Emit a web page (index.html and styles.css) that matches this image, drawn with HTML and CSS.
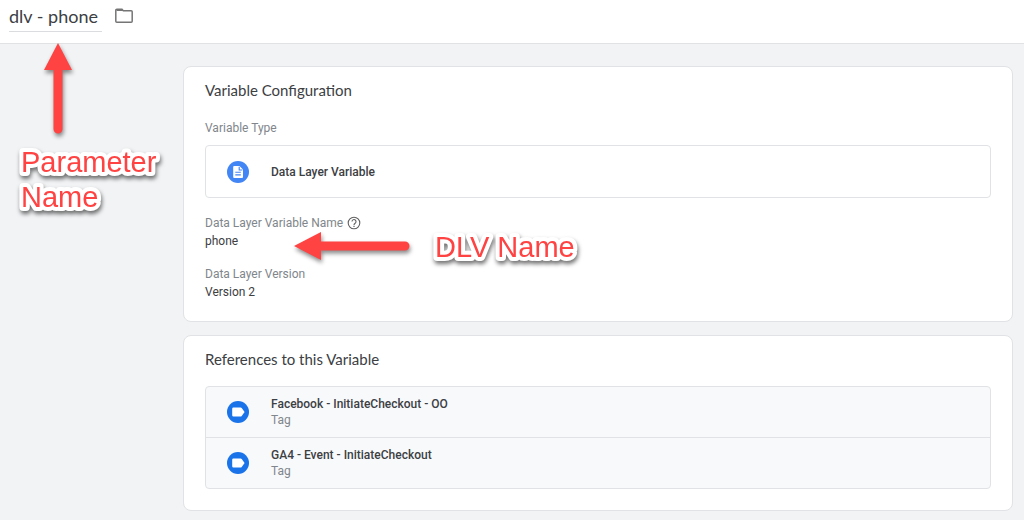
FILE: index.html
```html
<!DOCTYPE html>
<html lang="en">
<head>
    <meta charset="UTF-8">
    <meta name="viewport" content="width=device-width, initial-scale=1.0">
    <title>dlv - phone</title>
    <link rel="stylesheet" href="styles.css">
</head>
<body>
    <header class="topbar">
        <input type="text" class="variable-name" value="dlv - phone" aria-label="Variable name">
        <button type="button" class="folder-button" aria-label="Move to folder">
            <svg width="20" height="16" viewBox="0 0 20 16" fill="none" stroke="#757575" stroke-width="1.5">
                <path d="M1.8 3.2V13.2a1 1 0 0 0 1 1H17.2a1 1 0 0 0 1-1V3.7a1 1 0 0 0-1-1H9.3L8 1.3H2.8a1 1 0 0 0-1 1z"/>
                <path d="M2.5 1.5H8l1.4 1.6H2.5z" fill="#757575" stroke="none"/>
            </svg>
        </button>
    </header>

    <main class="content">
        <section class="card">
            <h2>Variable Configuration</h2>
            <div class="label">Variable Type</div>
            <button type="button" class="type-box">
                <svg class="icon" viewBox="0 0 22 22">
                    <circle cx="11" cy="11" r="11" fill="#4285f4"/>
                    <path d="M7.2 5h5.3L16 8.5V16a1 1 0 0 1-1 1H7.2a1 1 0 0 1-1-1V6a1 1 0 0 1 1-1z" fill="#fff"/>
                    <path d="M12.2 5.8V9h3.1M8.3 11.3h5.5M8.3 13.9h5.5" fill="none" stroke="#4285f4" stroke-width="1.1"/>
                </svg>
                <span class="item-name">Data Layer Variable</span>
            </button>

            <dl class="fields">
                <div class="field">
                    <dt class="label">
                        Data Layer Variable Name
                        <svg class="help" viewBox="0 0 14 14" fill="none" stroke="#616161">
                            <circle cx="7" cy="7" r="5.8" stroke-width="1.1"/>
                            <path d="M5 5.6a2 2 0 1 1 3.3 1.5C7.5 7.7 7 8 7 8.9" stroke-width="1.1"/>
                            <path d="M7 9.8v1.2" stroke-width="1.2"/>
                        </svg>
                    </dt>
                    <dd>phone</dd>
                </div>
                <div class="field">
                    <dt class="label">Data Layer Version</dt>
                    <dd>Version 2</dd>
                </div>
            </dl>
        </section>

        <section class="card">
            <h2>References to this Variable</h2>
            <ul class="references">
                <li>
                    <a href="#">
                        <svg class="icon" viewBox="0 0 22 22">
                            <circle cx="11" cy="11" r="11" fill="#1a73e8"/>
                            <path d="M6.4 6.5h7.2c.5 0 .8.2 1.1.6L17.6 11l-2.9 3.9c-.3.4-.6.6-1.1.6H6.4a1.2 1.2 0 0 1-1.2-1.2V7.7a1.2 1.2 0 0 1 1.2-1.2z" fill="#fff"/>
                        </svg>
                        <span>
                            <span class="item-name">Facebook - InitiateCheckout - OO</span>
                            <span class="item-type">Tag</span>
                        </span>
                    </a>
                </li>
                <li>
                    <a href="#">
                        <svg class="icon" viewBox="0 0 22 22">
                            <circle cx="11" cy="11" r="11" fill="#1a73e8"/>
                            <path d="M6.4 6.5h7.2c.5 0 .8.2 1.1.6L17.6 11l-2.9 3.9c-.3.4-.6.6-1.1.6H6.4a1.2 1.2 0 0 1-1.2-1.2V7.7a1.2 1.2 0 0 1 1.2-1.2z" fill="#fff"/>
                        </svg>
                        <span>
                            <span class="item-name">GA4 - Event - InitiateCheckout</span>
                            <span class="item-type">Tag</span>
                        </span>
                    </a>
                </li>
            </ul>
        </section>
    </main>

    <!-- Callouts over the page -->
    <svg class="arrow arrow-up" width="28" height="92" viewBox="0 0 28 92">
        <path d="M14 0L28 27H18.5V86a4.5 4.5 0 0 1-9 0V27H0z" fill="#ff4242"/>
    </svg>
    <svg class="callout callout-parameter" width="140" height="70">
        <text x="0" y="28">Parameter</text>
        <text x="0" y="63">Name</text>
    </svg>
    <svg class="arrow arrow-left" width="117" height="28" viewBox="0 0 117 28">
        <path d="M0 14L27 0V9.5H111a4.5 4.5 0 0 1 0 9H27V28z" fill="#ff4242"/>
    </svg>
    <svg class="callout callout-dlv" width="150" height="35">
        <text x="0" y="28">DLV Name</text>
    </svg>
</body>
</html>
```
FILE: styles.css
```css
* {
    box-sizing: border-box;
}
body {
    position: relative;
    margin: 0;
    min-height: 100vh;
    background: #f1f3f4;
    color: #3c4043;
    font-family: Roboto, sans-serif;
    font-size: 12px;
    line-height: 16px;
}
h2, dl, dd, ul {
    margin: 0;
    padding: 0;
}
button {
    font: inherit;
    color: inherit;
    cursor: pointer;
}
.topbar {
    display: flex;
    align-items: flex-start;
    gap: 12px;
    height: 44px;
    padding-left: 9px;
    background: #fff;
    border-bottom: 1px solid #e0e2e4;
}
.variable-name {
    width: 93px;
    height: 32px;
    padding: 0;
    border: none;
    border-bottom: 1px solid #dadce0;
    outline: none;
    color: #3c4043;
    font-family: Lato, sans-serif;
    font-size: 18px;
}
.folder-button {
    display: flex;
    margin-top: 8px;
    padding: 0;
    border: none;
    background: none;
}
.content {
    display: flex;
    flex-direction: column;
    gap: 13px;
    padding: 22px 11px 9px 183px;
}
.card {
    padding: 13px 21px 21px;
    background: #fff;
    border: 1px solid #e0e2e5;
    border-radius: 8px;
}
h2 {
    color: #3c4043;
    font-family: Lato, sans-serif;
    font-size: 15px;
    font-weight: 400;
    line-height: 20px;
}
.label {
    color: #80868b;
}
.card > .label {
    margin: 20px 0 9px;
}
.icon {
    flex: none;
    width: 22px;
    height: 22px;
}
.type-box {
    display: flex;
    align-items: center;
    gap: 22px;
    width: 100%;
    height: 53px;
    padding: 0 21px;
    background: #fff;
    border: 1px solid #e0e2e5;
    border-radius: 4px;
    text-align: left;
}
.item-name {
    display: block;
    color: #3c4043;
    font-weight: 500;
}
.item-type {
    display: block;
    color: #80868b;
}
.fields {
    display: flex;
    flex-direction: column;
    gap: 17px;
    margin-top: 17px;
}
.field dt {
    display: flex;
    align-items: center;
    gap: 4px;
}
.field dd {
    margin-top: 2px;
}
.help {
    width: 14px;
    height: 14px;
}
.references {
    margin-top: 17px;
    list-style: none;
    background: #f8f9fb;
    border: 1px solid #e0e2e5;
    border-radius: 4px;
}
.references li + li {
    border-top: 1px solid #e0e2e5;
}
.references a {
    display: flex;
    align-items: center;
    gap: 22px;
    height: 50px;
    padding: 0 21px;
    text-decoration: none;
}

/* Callouts */
.arrow {
    position: absolute;
    overflow: visible;
    filter: drop-shadow(1px 3px 2px rgba(0, 0, 0, 0.45));
}
.arrow-up {
    top: 43px;
    left: 44px;
}
.arrow-left {
    top: 232px;
    left: 294px;
}
.callout {
    position: absolute;
    overflow: visible;
    fill: #ff4242;
    font-family: "Liberation Sans", Arial, sans-serif;
    font-size: 29px;
    stroke: #fff;
    stroke-width: 8px;
    stroke-linejoin: round;
    paint-order: stroke;
    filter: drop-shadow(1px 3px 2px rgba(0, 0, 0, 0.55));
}
.callout-parameter {
    top: 144px;
    left: 21px;
}
.callout-dlv {
    top: 229px;
    left: 435px;
}
```
